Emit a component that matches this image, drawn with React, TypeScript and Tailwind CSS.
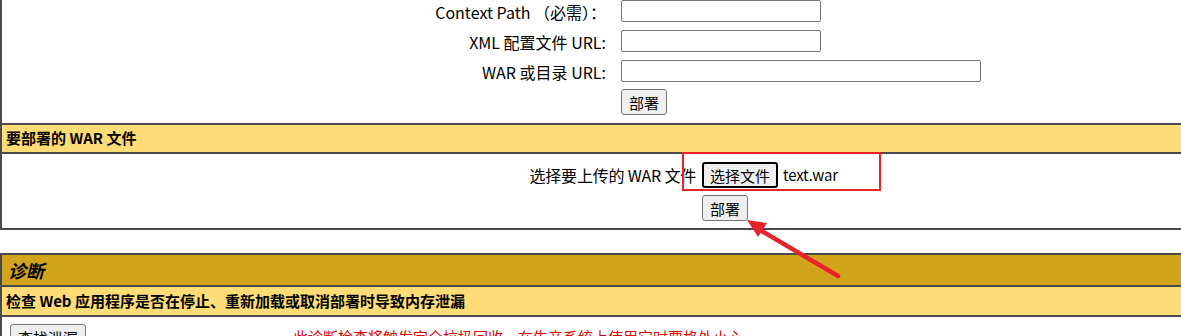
import { ReactNode } from 'react'

const btn =
  'h-[26px] rounded-[3px] border border-[#767676] bg-[#efefef] px-[7px] text-[15px] leading-none text-black'

function FieldRow({ label, children }: { label: string; children: ReactNode }) {
  return (
    <div className="flex h-[30px] items-center">
      <div className="w-[605px] whitespace-nowrap pr-[1px] pt-[2px] text-right">{label}</div>
      <div className="ml-[14px] flex items-center">{children}</div>
    </div>
  )
}

function SectionHeader({ children }: { children: ReactNode }) {
  return (
    <div className="flex h-[31px] items-center border-y-2 border-[#4a4a4a] bg-[#ffdc75] pl-[4px] text-[15px] font-bold">
      {children}
    </div>
  )
}

export default function App() {
  return (
    <div className="relative h-[336px] w-[1181px] overflow-hidden bg-white font-['Noto_Sans_CJK_SC',sans-serif] text-[16px] text-black">
      {/* deploy directory / war on server */}
      <div className="-mt-[4px] border-l-2 border-[#4a4a4a] pb-[7px]">
        <FieldRow label="Context Path （必需）：">
          <input className="h-[22px] w-[200px] rounded-[2px] border border-[#767676]" />
        </FieldRow>
        <FieldRow label="XML 配置文件 URL:">
          <input className="h-[22px] w-[200px] rounded-[2px] border border-[#767676]" />
        </FieldRow>
        <FieldRow label="WAR 或目录 URL:">
          <input className="h-[22px] w-[360px] rounded-[2px] border border-[#767676]" />
        </FieldRow>
        <div className="flex h-[30px] items-end pb-[1px]">
          <div className="w-[605px]" />
          <button className={'ml-[14px] h-[25px] ' + btn}>部署</button>
        </div>
      </div>

      {/* upload war */}
      <div className="border-l-2 border-[#4a4a4a]">
        <SectionHeader>要部署的 WAR 文件</SectionHeader>
        <div className="flex flex-col gap-[7px] border-b-2 border-[#4a4a4a] pb-[7px] pt-[8px] text-[15px]">
          <div className="flex h-[26px] items-center">
            <div className="w-[694px] whitespace-nowrap text-right text-[16px] tracking-[-0.2px]">选择要上传的 WAR 文件</div>
            <div className="ml-[6px] flex items-center">
              <button className="h-[26px] rounded-[3px] border-2 border-black bg-[#efefef] px-[6px] leading-none">
                选择文件
              </button>
              <span className="ml-[5px] tracking-[-0.2px]">text.war</span>
            </div>
          </div>
          <div className="flex h-[26px] items-center">
            <div className="w-[694px]" />
            <button className={'ml-[6px] ' + btn}>部署</button>
          </div>
        </div>
      </div>

      {/* diagnostics */}
      <div className="mt-[23px] border-l-2 border-[#4a4a4a]">
        <div className="flex h-[34px] items-center border-y-2 border-[#4a4a4a] bg-[#d2a41c] pl-[6px] text-[18px] font-bold italic">
          诊断
        </div>
        <div className="flex h-[30px] items-center border-b-2 border-[#4a4a4a] bg-[#ffdc75] pl-[4px] text-[15px] font-bold">
          检查 Web 应用程序是否在停止、重新加载或取消部署时导致内存泄漏
        </div>
        <div className="flex items-start pt-[7px]">
          <button className={'ml-[8px] ' + btn}>查找泄漏</button>
          <span className="ml-[207px] mt-[2px] whitespace-nowrap text-[15px] text-[#e00000]">
            此诊断检查将触发完全垃圾回收。在生产系统上使用它时要格外小心。
          </span>
        </div>
      </div>

      {/* annotation overlay */}
      <div className="pointer-events-none absolute left-[682px] top-[152px] h-[39px] w-[199px] border-2 border-[#e8232a]" />
      <svg className="pointer-events-none absolute left-0 top-0" width="1181" height="336">
        <line x1="838" y1="276" x2="760" y2="230" stroke="#e8232a" strokeWidth="4.5" strokeLinecap="round" />
        <polygon points="747,220 767,223 758,237" fill="#e8232a" />
      </svg>
    </div>
  )
}
